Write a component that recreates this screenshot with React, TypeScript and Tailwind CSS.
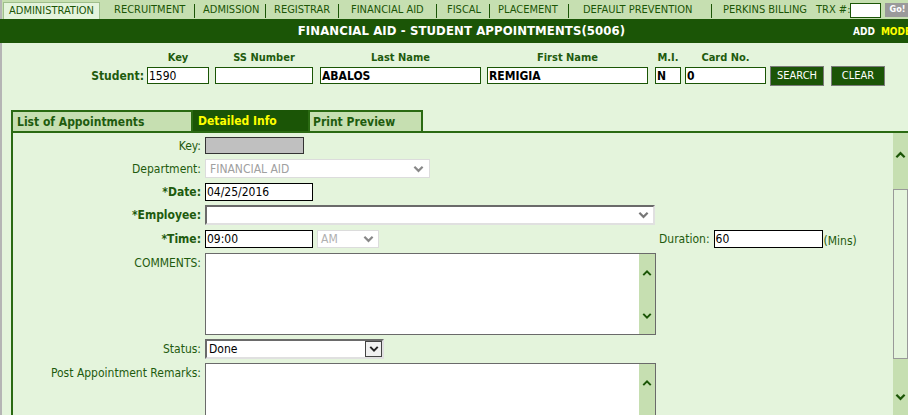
import React from "react";

const F = { fontFamily: '"DejaVu Sans", Verdana, sans-serif', fontStretch: "condensed" } as React.CSSProperties;

function Chev({ up, color = "#1b5506", w = 12 }: { up?: boolean; color?: string; w?: number }) {
  return (
    <svg width={w} height={8} viewBox="0 0 12 8">
      <polyline
        points={up ? "1.5,6.5 6,2 10.5,6.5" : "1.5,1.5 6,6 10.5,1.5"}
        fill="none"
        stroke={color}
        strokeWidth={2.4}
      />
    </svg>
  );
}

function NavItem({ label, w, pl, last }: { label: string; w: number; pl: number; last?: boolean }) {
  return (
    <div className="flex shrink-0 items-center h-[19px] justify-between" style={{ width: w }}>
      <span className="pt-[2px] whitespace-nowrap" style={{ paddingLeft: pl }}>
        {label}
      </span>
      {!last && <span className="w-px h-[14px] mt-[2px] bg-[#1b5506]" />}
    </div>
  );
}

function TA({ h }: { h: number }) {
  return (
    <div className="flex w-[451px] bg-white border border-[#6a6a6a]" style={{ height: h }}>
      <div className="flex-1" />
      <div className="w-[16px] bg-[#c6dfb1] flex flex-col items-center justify-between pt-[15px] pb-[14px]">
        <Chev up w={10} />
        <Chev w={10} />
      </div>
    </div>
  );
}

function Row({ label, bold, children, h, mt, top }: { label: string; bold?: boolean; children: React.ReactNode; h: number; mt: number; top?: boolean }) {
  return (
    <div className="flex" style={{ marginTop: mt, height: h }}>
      <div
        className={`w-[192px] text-right pr-[4px] text-[#1e5b0e] text-[12px] flex justify-end ${top ? "items-start pt-[1px]" : "items-center"} ${bold ? "font-bold" : ""}`}
      >
        {label}
      </div>
      {children}
    </div>
  );
}

const fields: [string, number, string, boolean, number][] = [
  ["Key", 62, "1590", false, 6],
  ["SS Number", 98, "", false, 7],
  ["Last Name", 161, "ABALOS", true, 6],
  ["First Name", 161, "REMIGIA", true, 7],
  ["M.I.", 26, "N", true, 4],
  ["Card No.", 81, "0", true, 4],
];

export default function App() {
  return (
    <div style={F} className="w-[908px] h-[415px] overflow-hidden bg-[#e4f4dc] relative">
      <div className="absolute left-0 top-0 bottom-0 w-[2px] bg-[#b5b5b5]" />
      {/* nav */}
      <div className="h-[19px] bg-[#c6dfb1] flex items-start pl-[3px] text-[11px] text-[#1b5506] overflow-hidden">
        <div className="w-[97px] shrink-0 h-[17px] mt-[2px] flex items-center justify-center bg-[#e4f4dc] border border-[#9fbf8c] border-b-0">
          <span className="pt-[1px]">ADMINISTRATION</span>
        </div>
        <NavItem label="RECRUITMENT" w={95} pl={14} />
        <NavItem label="ADMISSION" w={71} pl={8} />
        <NavItem label="REGISTRAR" w={73} pl={8} />
        <NavItem label="FINANCIAL AID" w={98} pl={12} />
        <NavItem label="FISCAL" w={53} pl={10} />
        <NavItem label="PLACEMENT" w={79} pl={8} />
        <NavItem label="DEFAULT PREVENTION" w={143} pl={14} />
        <NavItem label="PERKINS BILLING" w={104} pl={11} last />
        <div className="flex shrink-0 items-center h-[19px]">
          <span className="pt-[2px] whitespace-nowrap">TRX #:</span>
          <div className="w-[31px] shrink-0 h-[15px] mt-[1px] bg-white border border-[#1b5506]" />
          <div className="ml-[4px] shrink-0 mt-[1px] w-[24px] h-[14px] bg-[#9a9a9a] text-white text-[9px] font-bold flex items-center justify-center">
            Go!
          </div>
        </div>
      </div>
      {/* header */}
      <div className="h-[24px] bg-[#1b5506] relative flex items-center justify-center">
        <span className="text-white font-bold text-[13px] ml-[15px] tracking-[0.1px]">
          FINANCIAL AID - STUDENT APPOINTMENTS(5006)
        </span>
        <div className="absolute left-[853px] top-[5px] text-[10px] font-bold flex gap-[6px]">
          <span className="text-white">ADD</span>
          <span className="text-[#ffff00]">MODE</span>
        </div>
      </div>
      {/* student search */}
      <div className="flex mt-[8px] text-[11px] font-bold text-[#1e5b0e]">
        <div className="w-[147px] flex flex-col items-end pr-[3px]">
          <div className="h-[14px]" />
          <div className="h-[17px] mt-[2px] flex items-center text-[12px]">Student:</div>
        </div>
        {fields.map(([l, w, v, b, mr], i) => (
          <div key={i} className="flex flex-col items-center" style={{ marginRight: mr, width: w }}>
            <div className="h-[14px] flex items-center whitespace-nowrap">{l}</div>
            <div
              className={`h-[17px] mt-[2px] bg-white border border-[#1b5506] text-black text-[12px] flex items-center pl-[1px] ${b ? "font-bold" : "font-normal"}`}
              style={{ width: w }}
            >
              {v}
            </div>
          </div>
        ))}
        <div className="flex items-end gap-[7px]">
          <div className="w-[54px] h-[20px] bg-[#1b5506] border border-[#7a7a7a] text-white text-[11px] font-normal flex items-center justify-center mb-[-2px]">
            SEARCH
          </div>
          <div className="w-[54px] h-[20px] bg-[#1b5506] border border-[#7a7a7a] text-white text-[11px] font-normal flex items-center justify-center mb-[-2px]">
            CLEAR
          </div>
        </div>
      </div>
      {/* tabs */}
      <div className="mt-[26px] ml-[11px] flex border-b-2 border-[#2a6a12] h-[23px] text-[12px] font-bold">
        <div className="w-[182px] bg-[#c6dfb1] border-2 border-b-0 border-[#2a6a12] flex items-center pl-[4px] text-[#1e5b0e]">
          List of Appointments
        </div>
        <div className="w-[115px] bg-[#1b5506] flex items-center pl-[5px] text-[#ffff00]">Detailed Info</div>
        <div className="w-[115px] bg-[#c6dfb1] border-2 border-b-0 border-[#2a6a12] flex items-center pl-[3px] text-[#1e5b0e]">
          Print Preview
        </div>
      </div>
      {/* content */}
      <div className="ml-[11px] flex h-[300px]">
        <div className="flex-1 border-l-2 border-[#2a6a12]">
          <Row label="Key:" h={17} mt={4}>
            <div className="w-[99px] h-[17px] bg-[#c0c0c0] border border-[#333]" />
          </Row>
          <Row label="Department:" h={19} mt={5}>
            <div className="w-[225px] h-[19px] bg-white border border-[#dcdcdc] flex items-center justify-between pl-[4px] pr-[5px] text-[12px] text-[#a0a0a0]">
              <span>FINANCIAL AID</span>
              <Chev color="#888" w={11} />
            </div>
          </Row>
          <Row label="*Date:" bold h={18} mt={5}>
            <div className="w-[108px] h-[18px] bg-white border border-black flex items-center pl-[1px] text-[12px]">
              04/25/2016
            </div>
          </Row>
          <Row label="*Employee:" bold h={20} mt={4}>
            <div className="w-[450px] h-[20px] bg-white border-t-2 border-l-2 border-[#6a6a6a] border-r-2 border-b-2 border-r-[#e0e0e0] border-b-[#e0e0e0] flex items-center justify-end pr-[4px]">
              <Chev color="#777" w={11} />
            </div>
          </Row>
          <div className="flex mt-[5px] h-[18px]">
            <div className="w-[192px] text-right pr-[4px] text-[#1e5b0e] text-[12px] font-bold flex items-center justify-end">
              *Time:
            </div>
            <div className="w-[108px] h-[18px] bg-white border border-black flex items-center pl-[1px] text-[12px]">
              09:00
            </div>
            <div className="ml-[4px] w-[62px] h-[18px] bg-white border border-[#dcdcdc] flex items-center justify-between pl-[3px] pr-[4px] text-[12px] text-[#b0b0b0]">
              <span>AM</span>
              <Chev color="#888" w={11} />
            </div>
            <div className="ml-[280px] flex items-center text-[12px] text-[#1e5b0e]">
              Duration:
              <div className="ml-[4px] w-[109px] h-[18px] bg-white border border-black flex items-center pl-[1px] text-black">
                60
              </div>
              <span className="ml-[1px] mt-[3px]">(Mins)</span>
            </div>
          </div>
          <Row label="COMMENTS:" h={82} mt={5} top>
            <TA h={82} />
          </Row>
          <Row label="Status:" h={20} mt={4}>
            <div className="w-[179px] h-[20px] bg-white border-t-2 border-l-2 border-[#6a6a6a] border-r-2 border-b-2 border-r-[#e0e0e0] border-b-[#e0e0e0] flex items-center justify-between pl-[2px] text-[12px]">
              <span>Done</span>
              <div className="w-[17px] h-[16px] border border-[#444] bg-[#f0f0f0] flex items-center justify-center">
                <Chev color="#222" w={10} />
              </div>
            </div>
          </Row>
          <Row label="Post Appointment Remarks:" h={80} mt={4} top>
            <TA h={80} />
          </Row>
        </div>
        {/* page scrollbar */}
        <div className="w-[15px] flex flex-col">
          <div className="h-[56px] bg-[#c6dfb1] flex justify-center pt-[18px]">
            <Chev up w={11} />
          </div>
          <div className="h-[170px] border border-[#999] bg-[#e4f4dc]" />
          <div className="flex-1 bg-[#c6dfb1] flex justify-center pt-[34px]">
            <Chev w={11} />
          </div>
        </div>
      </div>
    </div>
  );
}
